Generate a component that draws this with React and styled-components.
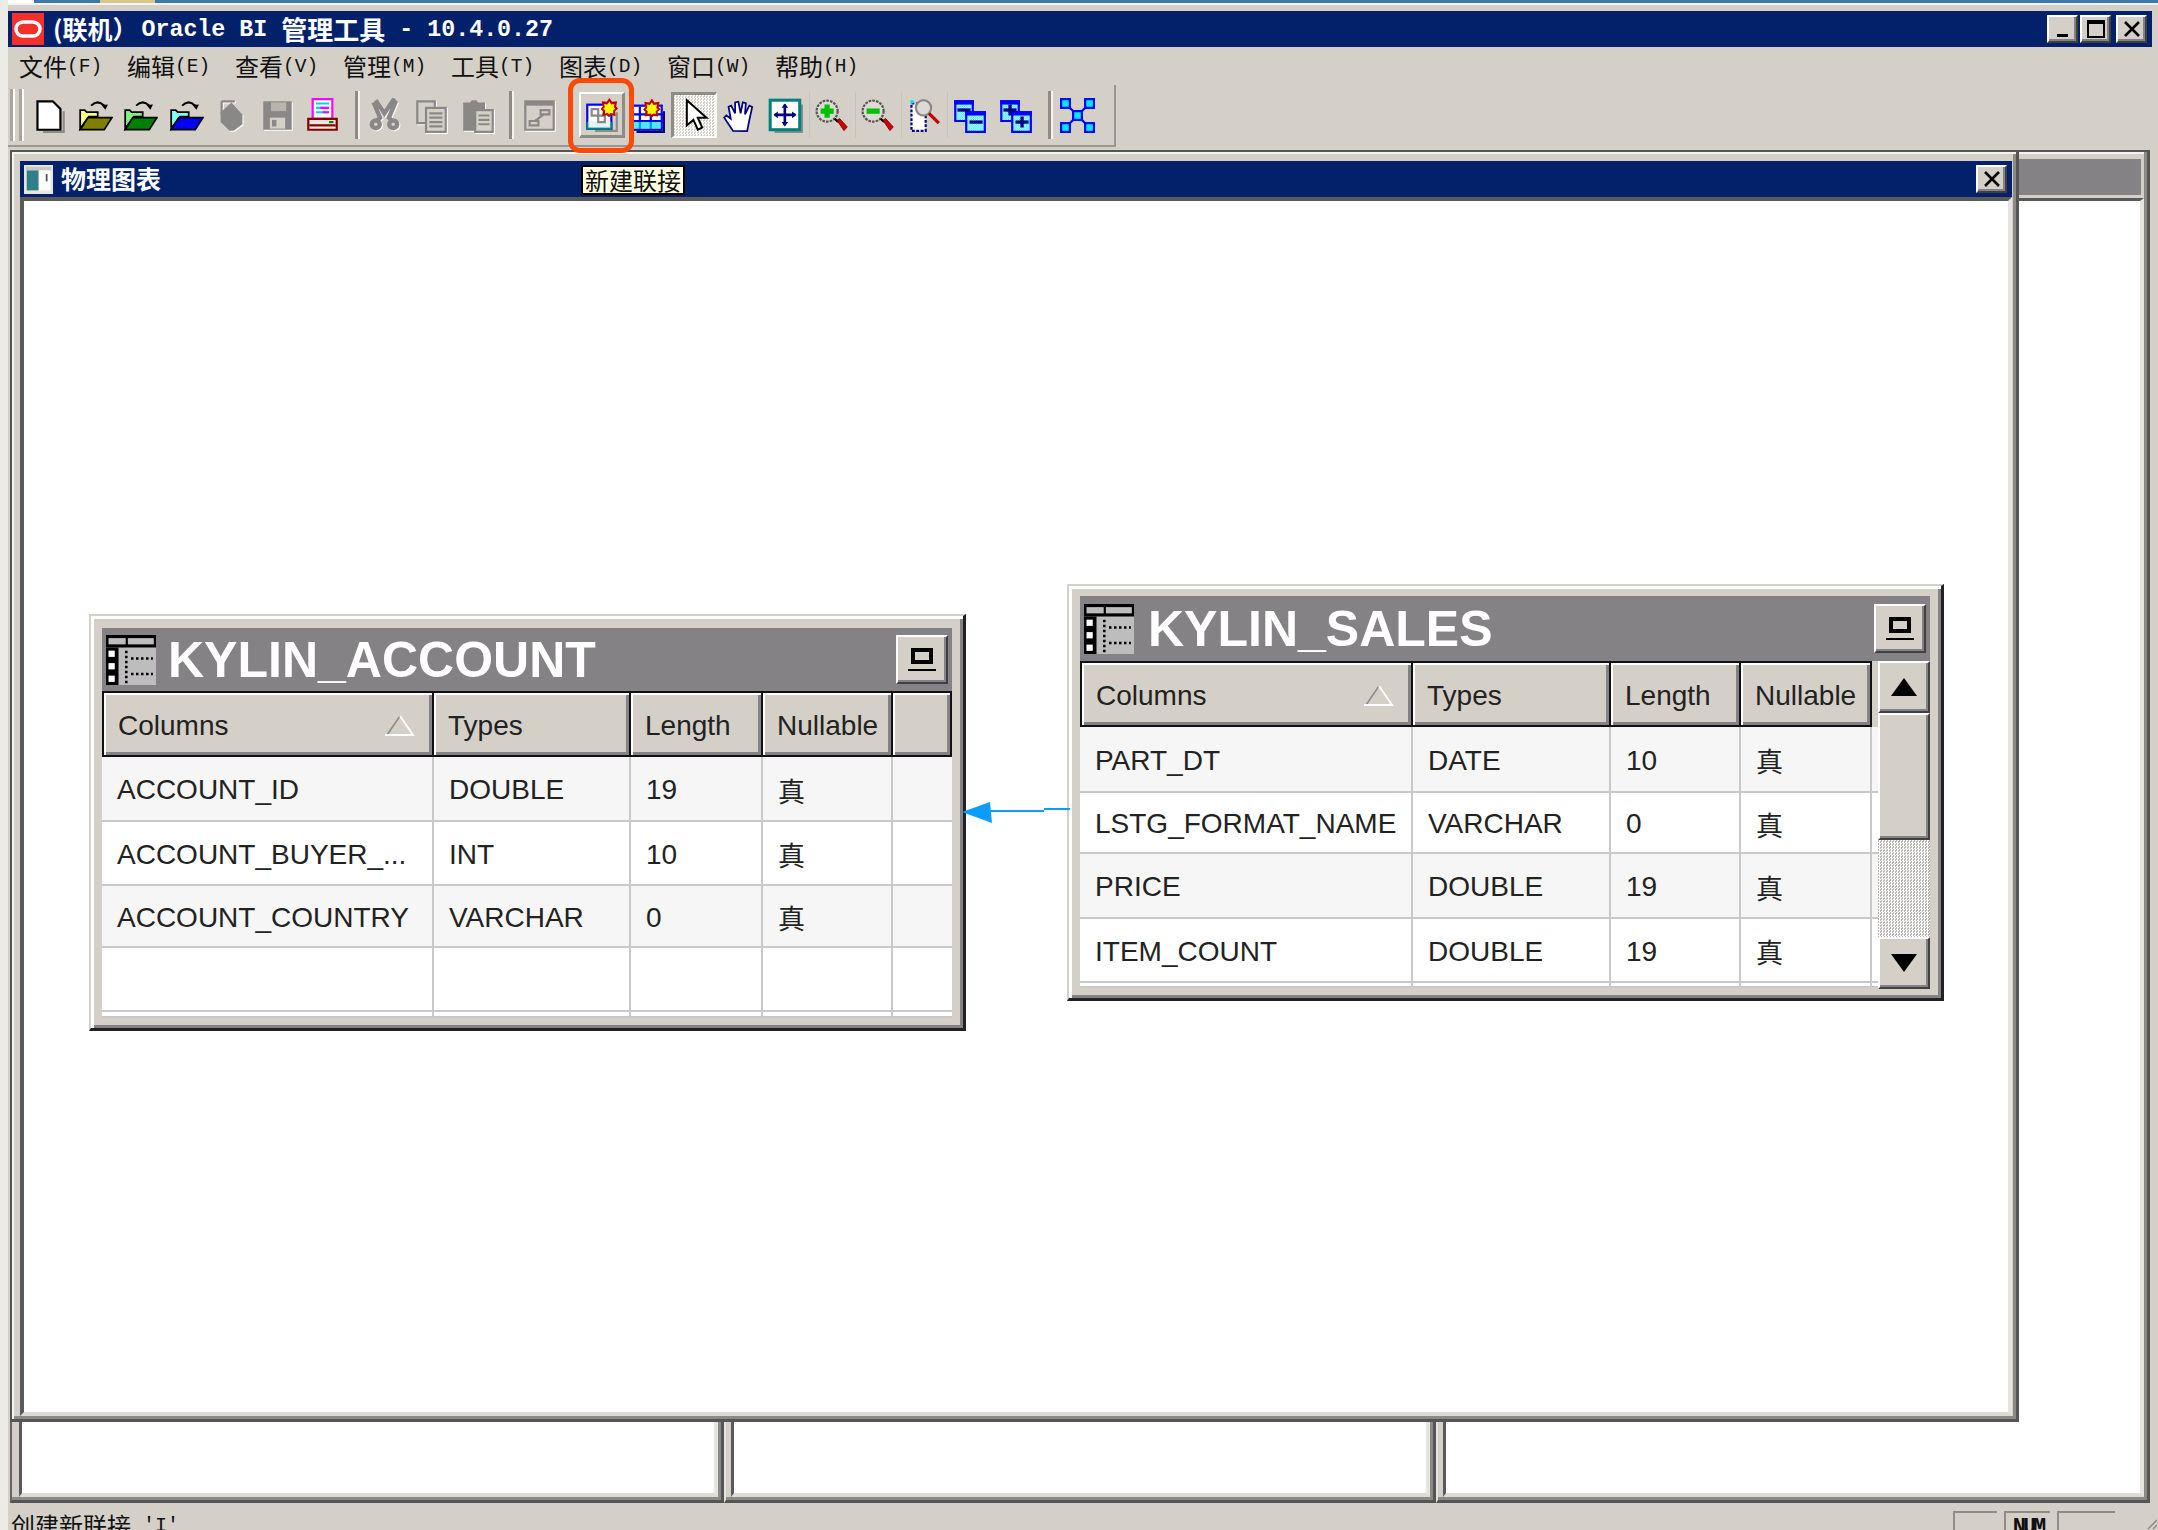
import React from "react";
import styled, { createGlobalStyle } from "styled-components";

const GlobalStyle = createGlobalStyle`
  html, body {
    margin: 0;
    background: #fff;
    overflow: hidden;
  }
  * {
    box-sizing: border-box;
  }
`;

const FACE = "#d4d0c8";
const SANS = `"Liberation Sans", "Noto Sans CJK SC", sans-serif`;
const CJK = `"Noto Sans CJK SC", sans-serif`;
const MONO = `"Liberation Mono", "Noto Sans CJK SC", monospace`;

const Page = styled.div`
  position: relative;
  width: 2158px;
  height: 1530px;
  overflow: hidden;
  background: ${FACE};
  display: flex;
  flex-direction: column;
  border-left: 8px solid #ecebe6;
`;

const TopStrip = styled.div`
  height: 3px;
  margin-left: -8px;
  background: linear-gradient(90deg, #fff 0 34px, #3d78ae 34px 100px, #d8c68c 100px 155px, #3d78ae 155px);
`;

const TopEdge = styled.div`
  height: 2px;
  margin: 0 0 6px -8px;
  background: #f4f3ef;
`;

const TitleBar = styled.div`
  height: 36px;
  width: 2144px;
  flex: none;
  background: #03216b;
  color: #fff;
  display: flex;
  align-items: center;
  padding: 0 5px 0 4px;
  font-weight: 700;
`;

const CjkText = styled.span`
  font-family: ${CJK};
  font-size: ${(p) => p.$size || 25}px;
  line-height: 1;
  white-space: pre;
`;

const MonoText = styled.span`
  font-family: ${MONO};
  font-size: ${(p) => p.$size || 23.3}px;
  line-height: 1;
  white-space: pre;
  margin-left: ${(p) => p.$left || 0}px;
  margin-top: ${(p) => p.$top || 0}px;
`;

const AppTitle = styled.div`
  display: flex;
  align-items: center;
  margin-left: 9px;
`;

const Logo = styled.svg`
  width: 32px;
  height: 32px;
  flex: none;
`;

const CaptionButtons = styled.div`
  display: flex;
  margin-left: auto;
`;

const RaisedButton = styled.button`
  padding: 0;
  margin: 0 0 0 ${(p) => p.$left || 0}px;
  width: ${(p) => p.$w}px;
  height: ${(p) => p.$h}px;
  flex: none;
  display: flex;
  align-items: center;
  justify-content: center;
  background: ${FACE};
  border: 0;
  border-top: 2px solid #fff;
  border-left: 2px solid #fff;
  border-right: 2px solid #404040;
  border-bottom: 2px solid #404040;
  box-shadow: inset -2px -2px 0 #848284;
`;

const MenuBar = styled.nav`
  height: 38px;
  flex: none;
  display: flex;
  align-items: center;
  padding-left: 11px;
  color: #111;
`;

const MenuItem = styled.div`
  width: 108px;
  display: flex;
  align-items: center;
`;

const ToolRow = styled.div`
  height: 65px;
  flex: none;
  display: flex;
  align-items: flex-start;
`;

const Toolbar = styled.div`
  height: 62px;
  display: flex;
  align-items: center;
  padding: 0 13px 0 2px;
  border-right: 2px solid #9a9790;
  border-bottom: 2px solid #9a9790;
`;

const Grip = styled.div`
  width: 12px;
  height: 52px;
  margin-right: 5px;
  border-left: 3px solid #a8a59e;
  border-right: 3px solid #a8a59e;
  box-shadow: inset 2px 0 0 #fff, 2px 0 0 #fff;
`;

const ToolSep = styled.div`
  width: 5px;
  height: 48px;
  flex: none;
  margin: 0 ${(p) => p.$r}px 0 ${(p) => p.$l}px;
  border-left: 3px solid #8f8c86;
  border-right: 2px solid #f4f3ef;
`;

const ToolGroup = styled.div`
  display: flex;
  align-items: center;
  margin-left: ${(p) => p.$left || 0}px;
`;

const ToolButton = styled.div`
  width: ${(p) => p.$w || 45.5}px;
  height: 46px;
  flex: none;
  display: flex;
  align-items: center;
  justify-content: center;
  ${(p) => p.$divider && `box-shadow: inset 1px 0 0 #c6c3bb;`}
  ${(p) =>
    p.$raised &&
    `
    border-top: 2px solid #fff;
    border-left: 2px solid #fff;
    border-right: 3px solid #8f8c86;
    border-bottom: 3px solid #8f8c86;
  `}
  ${(p) =>
    p.$pressed &&
    `
    border-top: 3px solid #8f8c86;
    border-left: 3px solid #8f8c86;
    border-right: 2px solid #fff;
    border-bottom: 2px solid #fff;
    background: repeating-conic-gradient(#fff 0 25%, #d4d0c8 0 50%) 0 0 / 3px 3px;
  `}
`;

const Px = styled.svg`
  width: ${(p) => p.$size || 35}px;
  height: ${(p) => p.$size || 35}px;
  display: block;
  flex: none;
  ${(p) => p.$off && `filter: drop-shadow(1.2px 1.2px 0 #fff);`}
`;

const Workspace = styled.div`
  margin-left: 2px;
  width: 2140px;
  height: 1353px;
  flex: none;
  display: grid;
  grid-template-rows: 1272px 81px;
`;

const TopArea = styled.div`
  display: flex;
  min-height: 0;
`;

const ChildWindow = styled.section`
  width: 2009px;
  height: 1272px;
  flex: none;
  display: flex;
  flex-direction: column;
  padding: 9px 4px 3px 8px;
  background: ${FACE};
  border-style: solid;
  border-color: #555;
  border-width: 2px 3px 3px 2px;
  box-shadow: inset 2px 2px 0 #f4f3ef, inset -3px -3px 0 #8c8a85;
`;

const ChildTitle = styled.header`
  height: 36px;
  flex: none;
  display: flex;
  align-items: center;
  padding: 0 5px 0 4px;
  background: #03216b;
  color: #fff;
  font-weight: 700;
`;

const ChildName = styled.div`
  margin-left: 8px;
`;

const Canvas = styled.div`
  position: relative;
  flex: 1;
  background: #fff;
  border-style: solid;
  border-width: 4px;
  border-color: #5a5a5a #e6e4de #dedbd4 #5a5a5a;
`;

const BackPane = styled.div`
  flex: 1;
  display: flex;
  flex-direction: column;
  padding-top: 7px;
  background: ${FACE};
  border-top: 2px solid #555;
  border-right: 3px solid #555;
  box-shadow: inset -3px 0 0 #8c8a85, inset 0 2px 0 #f4f3ef;
`;

const BackTitle = styled.div`
  height: 36px;
  flex: none;
  margin-right: 6px;
  background: #848284;
`;

const BackBody = styled.div`
  flex: 1;
  margin: 3px 3px 0 0;
  background: #fff;
  border-top: 3px solid #5a5a5a;
  border-right: 4px solid #e6e4de;
`;

const PaneRow = styled.div`
  display: grid;
  grid-template-columns: 714px 712px 714px;
`;

const Pane = styled.div`
  display: flex;
  padding: 0 3px 3px ${(p) => p.$left}px;
  background: ${FACE};
  border-left: 2px solid ${(p) => p.$edge};
  border-right: 3px solid #555;
  border-bottom: 3px solid #555;
  box-shadow: inset -3px -3px 0 #8c8a85;
`;

const PaneBody = styled.div`
  flex: 1;
  background: #fff;
  border-left: 3px solid #5a5a5a;
  border-right: 4px solid #e6e4de;
  border-bottom: 4px solid #dedbd4;
`;

const StatusBar = styled.footer`
  height: 27px;
  flex: none;
  width: 2150px;
  position: relative;
  display: flex;
  overflow: hidden;
  padding-left: 3px;
  color: #111;
`;

const StatusText = styled.div`
  margin-top: 9px;
  display: flex;
  font-size: 24px;
  line-height: 26px;
  font-family: ${CJK};
  white-space: pre;
`;

const StatusCells = styled.div`
  margin: 8px 0 0 auto;
  display: flex;
  padding-right: 43px;
`;

const StatusCell = styled.div`
  width: ${(p) => p.$w}px;
  height: 30px;
  margin-left: ${(p) => p.$left}px;
  border-top: 2px solid #8f8c86;
  border-left: 2px solid #8f8c86;
  font-family: ${MONO};
  font-size: 22px;
  font-weight: 700;
  letter-spacing: -3px;
  line-height: 30px;
  text-align: center;
`;

const StatusGrip = styled.svg`
  position: absolute;
  right: 0;
  bottom: 0;
  width: 12px;
  height: 12px;
`;

// diagram nodes sit on a free canvas, so they are placed by coordinates
const Node = styled.div`
  position: absolute;
  left: ${(p) => p.$x}px;
  top: ${(p) => p.$y}px;
  width: 877px;
  height: 417px;
  display: flex;
  flex-direction: column;
  padding: ${(p) => p.$pad}px 11px 9px 11px;
  background: ${FACE};
  border-style: solid;
  border-width: 2px 3px 3px 2px;
  border-color: #d4d0c8 #222 #222 #d4d0c8;
  box-shadow: inset 3px 3px 0 #fff, inset -3px -3px 0 #848284;
`;

const NodeTitle = styled.div`
  height: ${(p) => p.$h}px;
  flex: none;
  display: flex;
  align-items: center;
  gap: ${(p) => p.$gap}px;
  padding: 0 4px;
  background: #848284;
  color: #fff;
  font-family: ${SANS};
  font-size: 50px;
  font-weight: 700;
`;

const NodeName = styled.div`
  line-height: 1;
  flex: 1;
`;

const NodeBody = styled.div`
  display: flex;
  flex: 1;
  min-height: 0;
`;

const Table = styled.div`
  flex: 1;
  min-width: 0;
  font-family: ${SANS};
  font-size: 28px;
  color: #222;
`;

const HeadRow = styled.div`
  display: grid;
  grid-template-columns: ${(p) => p.$cols};
  height: 66px;
`;

const HeadCell = styled.div`
  display: flex;
  align-items: center;
  justify-content: space-between;
  padding: 3px 16px 0 14px;
  background: ${FACE};
  border-style: solid;
  border-color: #111;
  border-width: 2px 2px 2px 0;
  box-shadow: inset 2px 2px 0 #fff, inset -3px -3px 0 #848284;
  &:first-child {
    border-left-width: 2px;
  }
`;

const DataRow = styled.div`
  display: grid;
  grid-template-columns: ${(p) => p.$cols};
  height: ${(p) => p.$h}px;
  background: ${(p) => (p.$shade ? "#f6f6f6" : "#fff")};
  border-bottom: 2px solid #c9c9c9;
  overflow: hidden;
`;

const Cell = styled.div`
  display: flex;
  align-items: center;
  padding: 3px 0 0 15px;
  white-space: nowrap;
  overflow: hidden;
  border-right: 2px solid #c9c9c9;
  &:last-child {
    border-right: 0;
  }
`;

const TrueMark = styled.span`
  font-family: ${CJK};
  font-size: 27px;
`;

const SortMark = styled.svg`
  width: 32px;
  height: 22px;
  flex: none;
`;

const ScrollBar = styled.div`
  width: 52px;
  flex: none;
  display: flex;
  flex-direction: column;
`;

const ScrollTrack = styled.div`
  flex: 1;
  background: repeating-conic-gradient(#fff 0 25%, #b9b7b2 0 50%) 0 0 / 3px 3px;
`;

const Link = styled.svg`
  position: absolute;
  left: 938px;
  top: 594px;
  width: 108px;
  height: 30px;
`;

const Tooltip = styled.div`
  position: absolute;
  left: 573px;
  top: 165px;
  width: 104px;
  height: 30px;
  background: #ffffe1;
  border: 2px solid #000;
  color: #111;
  font-family: ${CJK};
  font-size: 24px;
  line-height: 25px;
  text-align: center;
  white-space: nowrap;
`;

const CalloutRing = styled.div`
  position: absolute;
  left: 560px;
  top: 78px;
  width: 66px;
  height: 75px;
  border: 5px solid #fb4a08;
  border-radius: 12px;
`;

/* ---- drawings ---- */

const Dither = ({ id, color }) => (
  <pattern id={id} width="1" height="1" patternUnits="userSpaceOnUse">
    <rect width="1" height="1" fill="#fff" />
    <rect width="0.5" height="0.5" fill={color} />
    <rect x="0.5" y="0.5" width="0.5" height="0.5" fill={color} />
  </pattern>
);

const DocIcon = () => (
  <Px viewBox="0 0 16 16">
    <path d="M14.5 6v9.5H5" fill="none" stroke="#8f8c86" />
    <path d="M2.5 1.5h7l3.5 3.5v9.5H2.5z" fill="#fff" stroke="#000" />
  </Px>
);

const FolderIcon = ({ id, light, dark }) => (
  <Px viewBox="0 0 16 16">
    <defs>
      <Dither id={id} color={light} />
    </defs>
    <path d="M6 3.5q3-3 6 0" fill="none" stroke="#000" strokeWidth="0.9" />
    <path d="M13.7 3l-3 .2 1.8 2.2z" fill="#000" />
    <path d="M1 5.5h2l1 1h5v2H5l-4 5.5z" fill={`url(#${id})`} stroke="#000" strokeWidth="0.8" />
    <path d="M4.5 9H15.5l-3.5 5.5H1z" fill={dark} stroke="#000" strokeWidth="0.8" />
  </Px>
);

const DbOffIcon = () => (
  <Px viewBox="0 0 16 16" $off>
    <path d="M3.5 1.5h6M3.500 1.500v6" stroke="#8a8886" fill="none" />
    <path d="M8 2l5 5.500v4.500l-4 3h-2l-4-4v-4.500z" fill="#8a8886" />
  </Px>
);

const FloppyOffIcon = () => (
  <Px viewBox="0 0 16 16" $off>
    <path d="M1.500 1.500h13v13h-13z" fill="#8a8886" />
    <path d="M4.500 9h7v5h-7z" fill="#d4d0c8" />
    <rect x="5.500" y="10" width="2" height="3" fill="#8a8886" />
    <path d="M5 2h7v4H5z" fill="#b7b4ad" />
  </Px>
);

const ScissorsOffIcon = () => (
  <Px viewBox="0 0 16 16" $off>
    <path d="M4 1l4 6 4-6 1 1-3 7 2 2M3 2l3 7-2 2" fill="none" stroke="#8a8886" strokeWidth="2" />
    <circle cx="4" cy="12" r="2.800" fill="#8a8886" />
    <circle cx="12" cy="12" r="2.800" fill="#8a8886" />
    <circle cx="4" cy="12" r="0.800" fill="#d4d0c8" />
    <circle cx="12" cy="12" r="0.800" fill="#d4d0c8" />
  </Px>
);

const CopyOffIcon = () => (
  <Px viewBox="0 0 16 16" $off>
    <path d="M1.500 1.500h8v10h-8z" fill="#d4d0c8" stroke="#8a8886" />
    <path d="M5.500 4.500h9v11h-9z" fill="#d4d0c8" stroke="#8a8886" />
    <path d="M7 7h6M7 9h6M7 11h6M7 13h6" stroke="#8a8886" />
  </Px>
);

const PasteOffIcon = () => (
  <Px viewBox="0 0 16 16" $off>
    <path d="M1 2h3l1-1h2l1 1h3v13H1z" fill="#8a8886" />
    <path d="M6.500 5.500h8v10h-8z" fill="#d4d0c8" stroke="#8a8886" />
    <path d="M8 8h5M8 10h5M8 12h5" stroke="#8a8886" />
  </Px>
);

const DiagramOffIcon = () => (
  <Px viewBox="0 0 16 16" $off>
    <path d="M1.500 1.500h13v13h-13z" fill="#d4d0c8" stroke="#8a8886" />
    <rect x="1.500" y="1.500" width="13" height="2" fill="#8a8886" />
    <path d="M8.500 5.500h4v2h-4zM3.500 10.500h4v2h-4zM10 7.500l-4 3" fill="none" stroke="#8a8886" />
  </Px>
);

const PrinterIcon = () => (
  <Px viewBox="0 0 16 16">
    <rect x="3.500" y="0.500" width="9" height="9" fill="#fff" stroke="#ff00ff" />
    <path d="M5 2.500h6M5 4.500h6M5 6.500h6" stroke="#00d0ff" />
    <path d="M7 4.500h4M8 6.500h3" stroke="#ff00ff" />
    <path d="M1.500 9.500h13v5h-13z" fill="#e8e6e0" stroke="#800000" />
    <rect x="2" y="12" width="12" height="1" fill="#800000" />
    <rect x="11" y="10.500" width="2" height="1" fill="#008000" />
  </Px>
);

const Star = ({ x = 0, y = 0 }) => (
  <g transform={`translate(${x} ${y})`}>
    <path d="M4 0l1.200 1.800 2.300-.3-.4 2.400.9 1-1.400 1.200.2 2.200-2-.4-1 1-1-1-2.100.4.3-2.200L0 5l1-1.100L.5 1.500l2.300.3z" fill="#c00000" />
    <path d="M4 1.700l.8 1.300 1.500-.2-.3 1.500.7.7-1 .8.1 1.300-1.300-.2-.6.6-.6-.6-1.300.2.1-1.300-.9-.8.7-.7-.3-1.500 1.500.2z" fill="#ffff00" />
  </g>
);

const NewLinkIcon = () => (
  <Px viewBox="0 0 16 16">
    <path d="M15 7v8.500H5" fill="none" stroke="#8f8c86" />
    <rect x="1.500" y="3.500" width="11" height="11" fill="#fff" stroke="#0000ff" />
    <path d="M1 11.500h12v3.500H1z" fill="#008080" />
    <rect x="2" y="11" width="10" height="3" fill="#e4f2f2" />
    <path d="M3.500 5.500h3v3h-3zM6.500 8.500h3v3h-3z" fill="none" stroke="#8a8886" />
    <Star x={7.600} y={0.400} />
  </Px>
);

const NewTableIcon = () => (
  <Px viewBox="0 0 16 16">
    <rect x="0.500" y="3.500" width="14" height="11" fill="#fff" stroke="#0000ff" />
    <path d="M0 7.500h15M0 10.500h15M4.500 4v10M9.500 4v10" stroke="#0000ff" />
    <rect x="1" y="11" width="13" height="3" fill="#00e0ff" opacity="0.7" />
    <path d="M15.500 6v9.500H3" fill="none" stroke="#000080" />
    <Star x={6} y={0.200} />
  </Px>
);

const PointerIcon = () => (
  <Px viewBox="0 0 16 16">
    <path d="M4.500 1v11.500l3-2.500 2 4.500 2-1-2-4.500h4z" fill="#fff" stroke="#000" strokeWidth="0.9" />
  </Px>
);

const HandIcon = () => (
  <Px viewBox="0 0 16 16">
    <path
      d="M5 15l-4-6 1-1 2 1.500L3 4l1.200-.5L6 7 6 2l1.500-.3L8.500 7l1-5 1.400.4L10.500 7.500l2-4 1.300.6-1.300 6-1 5z"
      fill="#fff"
      stroke="#000080"
      strokeWidth="0.8"
    />
  </Px>
);

const FitIcon = () => (
  <Px viewBox="0 0 16 16">
    <path d="M15.500 3v12.500H3" fill="none" stroke="#8f8c86" />
    <rect x="1" y="1" width="13.500" height="13.500" fill="#fff" stroke="#008080" strokeWidth="1.400" />
    <path d="M7.700 3v9.500M3 7.700h9.500" stroke="#000080" strokeWidth="1.200" />
    <path d="M7.700 2.500l1.500 2H6.200zM7.700 13l1.500-2H6.200zM2.500 7.700l2-1.500v3zM13 7.700l-2-1.500v3z" fill="#000080" />
  </Px>
);

const ZoomIcon = ({ children }) => (
  <Px viewBox="0 0 16 16">
    <circle cx="6" cy="6" r="4.800" fill="#dcdad4" stroke="#555" strokeWidth="1" strokeDasharray="1.200 0.500" />
    {children}
    <path d="M9.500 9.500l1.500 1.500" stroke="#000" />
    <path d="M10.500 10.200l1.200-.8 3.500 3.800-1.500 1.700z" fill="#d00000" stroke="#700" strokeWidth="0.400" />
  </Px>
);

const ZoomRectIcon = () => (
  <Px viewBox="-1 0 16 16">
    <rect x="1.500" y="2.500" width="6.500" height="12.500" fill="#fff" stroke="#000080" strokeDasharray="1.300 0.700" />
    <rect x="1" y="1" width="1.500" height="1.500" fill="#00e0ff" />
    <circle cx="7" cy="4.500" r="3.500" fill="#dcdad4" stroke="#8a8886" />
    <path d="M9.500 7l4.500 4.500" stroke="#c00000" strokeWidth="1.500" />
  </Px>
);

const StackIcon = ({ plus, id }) => (
  <Px viewBox="0 0 16 16">
    <defs>
      <Dither id={id} color="#00e0ff" />
    </defs>
    <path d="M1.500 1.500h8v9h-8z" fill={`url(#${id})`} stroke="#0000ff" />
    <rect x="1" y="1" width="9" height="2" fill="#0000ff" />
    <path d="M6.500 6.500h8.500v9H6.500z" fill={`url(#${id})`} stroke="#0000ff" />
    <rect x="6" y="6" width="9.500" height="2" fill="#0000ff" />
    <path d="M2.500 5.500h6" stroke="#000080" strokeWidth="1.500" />
    <path d="M8 11h6" stroke="#000080" strokeWidth="1.500" />
    {plus && <path d="M5.500 3v5M11 8.500v5" stroke="#000080" strokeWidth="1.500" />}
  </Px>
);

const NetNode = ({ x, y }) => (
  <rect x={x} y={y} width="4" height="4" fill="#00e8ff" stroke="#0000ff" strokeWidth="1" />
);

const NetworkIcon = () => (
  <Px viewBox="0 0 16 16">
    <path d="M3 3l10 10M13 3L3 13" stroke="#0000ff" strokeWidth="1" />
    <NetNode x={0.500} y={0.500} />
    <NetNode x={11.500} y={0.500} />
    <NetNode x={6} y={6} />
    <NetNode x={0.500} y={11.500} />
    <NetNode x={11.500} y={11.500} />
  </Px>
);

const TableIcon = () => (
  <Px viewBox="0 0 16 16" $size={50}>
    <rect width="16" height="16" fill="#bdbdbd" />
    <rect width="16" height="4" fill="#000" />
    <rect x="0.800" y="1" width="5.500" height="2" fill="#bdbdbd" />
    <rect x="7" y="1" width="8.300" height="2" fill="#bdbdbd" />
    <rect width="4" height="16" y="4" fill="#000" />
    <rect x="0.800" y="5" width="2" height="2" fill="#fff" />
    <rect x="0.800" y="9" width="2" height="2" fill="#fff" />
    <rect x="0.800" y="13" width="2" height="2" fill="#fff" />
    <path d="M6.500 5v11M8 7.500h7M8 12.500h7" stroke="#000" strokeDasharray="0.800 0.800" strokeWidth="0.800" />
  </Px>
);

const ChildIcon = () => (
  <Px viewBox="0 0 16 16" $size={29}>
    <rect width="16" height="16" fill="#e8e6e0" />
    <rect x="1" y="1" width="14" height="2" fill="#c8c8c4" />
    <rect x="1.500" y="3" width="6.500" height="11" fill="#2f7f88" />
    <rect x="8.500" y="3" width="6" height="11" fill="#fff" />
    <rect x="12" y="5" width="1" height="4" fill="#555" />
  </Px>
);

const CloseGlyph = () => (
  <svg width="18" height="16" viewBox="0 0 18 16">
    <path d="M2 1l14 14M16 1L2 15" stroke="#000" strokeWidth="2.600" />
  </svg>
);

const RestoreGlyph = () => (
  <svg width="30" height="24" viewBox="0 0 30 24">
    <rect x="6" y="2" width="18" height="12" fill="none" stroke="#000" strokeWidth="4" />
    <rect x="1" y="21" width="28" height="2" fill="#000" />
  </svg>
);

const SortGlyph = () => (
  <SortMark viewBox="0 0 32 22">
    <path d="M16 1L3 20" stroke="#8f8c86" strokeWidth="1.500" />
    <path d="M16 1l13 19H1" fill="none" stroke="#fff" strokeWidth="2" />
  </SortMark>
);

const TOOLS_A = [
  <DocIcon />,
  <FolderIcon id="fa" light="#ffff00" dark="#808000" />,
  <FolderIcon id="fb" light="#00e000" dark="#008000" />,
  <FolderIcon id="fc" light="#00ffff" dark="#0000ff" />,
  <DbOffIcon />,
  <FloppyOffIcon />,
  <PrinterIcon />,
];

const TOOLS_B = [<ScissorsOffIcon />, <CopyOffIcon />, <PasteOffIcon />];

const MENUS = [
  ["文件", "(F)"],
  ["编辑", "(E)"],
  ["查看", "(V)"],
  ["管理", "(M)"],
  ["工具", "(T)"],
  ["图表", "(D)"],
  ["窗口", "(W)"],
  ["帮助", "(H)"],
];

const HEADS = ["Columns", "Types", "Length", "Nullable"];

const ACCOUNT_ROWS = [
  { h: 65, cells: ["ACCOUNT_ID", "DOUBLE", "19"] },
  { h: 64, cells: ["ACCOUNT_BUYER_...", "INT", "10"] },
  { h: 62, cells: ["ACCOUNT_COUNTRY", "VARCHAR", "0"] },
  { h: 64, cells: ["", "", ""], blank: true },
  { h: 6, cells: ["", "", ""], blank: true },
];

const SALES_ROWS = [
  { h: 66, cells: ["PART_DT", "DATE", "10"] },
  { h: 61, cells: ["LSTG_FORMAT_NAME", "VARCHAR", "0"] },
  { h: 65, cells: ["PRICE", "DOUBLE", "19"] },
  { h: 64, cells: ["ITEM_COUNT", "DOUBLE", "19"] },
  { h: 5, cells: ["", "", ""], blank: true },
];

const TableView = ({ cols, rows, extraHead }) => (
  <Table>
    <HeadRow $cols={cols}>
      {HEADS.map((h, i) => (
        <HeadCell key={h}>
          {h}
          {i === 0 && <SortGlyph />}
        </HeadCell>
      ))}
      {extraHead && <HeadCell />}
    </HeadRow>
    {rows.map((row, i) => (
      <DataRow key={i} $cols={cols} $h={row.h} $shade={i % 2 === 0 && !row.blank}>
        {row.cells.map((c, j) => (
          <Cell key={j}>{c}</Cell>
        ))}
        <Cell>{!row.blank && <TrueMark>真</TrueMark>}</Cell>
        <Cell />
      </DataRow>
    ))}
  </Table>
);

const DiagramNode = ({ x, y, pad, titleH, gap, name, children }) => (
  <Node $x={x} $y={y} $pad={pad}>
    <NodeTitle $h={titleH} $gap={gap}>
      <TableIcon />
      <NodeName>{name}</NodeName>
      <RaisedButton $w={52} $h={49}>
        <RestoreGlyph />
      </RaisedButton>
    </NodeTitle>
    <NodeBody>{children}</NodeBody>
  </Node>
);

export default function App() {
  return (
    <>
      <GlobalStyle />
      <Page>
        <TopStrip />
        <TopEdge />
        <TitleBar>
          <Logo viewBox="0 0 32 32">
            <rect width="32" height="32" fill="#f5302a" />
            <rect x="4" y="9" width="24" height="14" rx="7" fill="none" stroke="#fff" strokeWidth="3.500" />
          </Logo>
          <AppTitle>
            <CjkText>(联机）</CjkText>
            <MonoText $left={4} $top={3}>
              Oracle BI{" "}
            </MonoText>
            <CjkText $size={26}>管理工具</CjkText>
            <MonoText $top={3}> - 10.4.0.27</MonoText>
          </AppTitle>
          <CaptionButtons>
            <RaisedButton $w={31} $h={28}>
              <svg width="16" height="18" viewBox="0 0 16 18">
                <rect x="2" y="14" width="11" height="3" fill="#000" />
              </svg>
            </RaisedButton>
            <RaisedButton $w={31} $h={28} $left={2}>
              <svg width="20" height="20" viewBox="0 0 20 20">
                <path d="M2 2h16v16H2z" fill="none" stroke="#000" strokeWidth="2" />
                <rect x="2" y="2" width="16" height="3" fill="#000" />
              </svg>
            </RaisedButton>
            <RaisedButton $w={31} $h={28} $left={5}>
              <CloseGlyph />
            </RaisedButton>
          </CaptionButtons>
        </TitleBar>

        <MenuBar>
          {MENUS.map(([label, key]) => (
            <MenuItem key={label}>
              <CjkText $size={24}>{label}</CjkText>
              <MonoText $size={19.5} $top={4}>
                {key}
              </MonoText>
            </MenuItem>
          ))}
        </MenuBar>

        <ToolRow>
          <Toolbar>
            <Grip />
            <ToolGroup>
              {TOOLS_A.map((icon, i) => (
                <ToolButton key={i}>{icon}</ToolButton>
              ))}
            </ToolGroup>
            <ToolSep $l={9} $r={1} />
            <ToolGroup>
              {TOOLS_B.map((icon, i) => (
                <ToolButton key={i} $w={47}>
                  {icon}
                </ToolButton>
              ))}
            </ToolGroup>
            <ToolSep $l={7} $r={3} />
            <ToolButton $w={46}>
              <DiagramOffIcon />
            </ToolButton>
            <ToolGroup $left={16}>
              <ToolButton $w={46} $raised>
                <NewLinkIcon />
              </ToolButton>
              <ToolButton $w={46}>
                <NewTableIcon />
              </ToolButton>
              <ToolButton $w={46} $pressed>
                <PointerIcon />
              </ToolButton>
              <ToolButton $w={46}>
                <HandIcon />
              </ToolButton>
              <ToolButton $w={46}>
                <FitIcon />
              </ToolButton>
              <ToolButton $w={46} $divider>
                <ZoomIcon>
                  <path d="M6 3v6M3 6h6" stroke="#00c000" strokeWidth="2.400" />
                </ZoomIcon>
              </ToolButton>
              <ToolButton $w={46} $divider>
                <ZoomIcon>
                  <path d="M3 6h6" stroke="#00c000" strokeWidth="2.400" />
                </ZoomIcon>
              </ToolButton>
              <ToolButton $w={46} $divider>
                <ZoomRectIcon />
              </ToolButton>
              <ToolButton $w={46} $divider>
                <StackIcon id="sa" />
              </ToolButton>
              <ToolButton $w={46}>
                <StackIcon id="sb" plus />
              </ToolButton>
            </ToolGroup>
            <ToolSep $l={9} $r={2} />
            <ToolButton $w={46}>
              <NetworkIcon />
            </ToolButton>
          </Toolbar>
        </ToolRow>

        <Workspace>
          <TopArea>
            <ChildWindow>
              <ChildTitle>
                <ChildIcon />
                <ChildName>
                  <CjkText>物理图表</CjkText>
                </ChildName>
                <CaptionButtons>
                  <RaisedButton $w={31} $h={28}>
                    <CloseGlyph />
                  </RaisedButton>
                </CaptionButtons>
              </ChildTitle>
              <Canvas>
                <DiagramNode x={65} y={413} pad={12} titleH={63} gap={12} name="KYLIN_ACCOUNT">
                  <TableView cols="332px 197px 132px 130px 59px" rows={ACCOUNT_ROWS} extraHead />
                </DiagramNode>
                <DiagramNode x={1043} y={383} pad={10} titleH={65} gap={14} name="KYLIN_SALES">
                  <TableView cols="333px 198px 130px 131px 5px" rows={SALES_ROWS} />
                  <ScrollBar>
                    <RaisedButton $w={52} $h={52}>
                      <svg width="28" height="20" viewBox="0 0 28 20">
                        <path d="M14 1l13 18H1z" fill="#000" />
                      </svg>
                    </RaisedButton>
                    <RaisedButton $w={52} $h={127} />
                    <ScrollTrack />
                    <RaisedButton $w={52} $h={52}>
                      <svg width="28" height="20" viewBox="0 0 28 20">
                        <path d="M14 19L27 1H1z" fill="#000" />
                      </svg>
                    </RaisedButton>
                  </ScrollBar>
                </DiagramNode>
                <Link viewBox="0 0 108 30">
                  <path d="M28 16H82M82 14H108" fill="none" stroke="#0a9cff" strokeWidth="2" />
                  <path d="M0 17L28 7l2 21z" fill="#0a9cff" />
                </Link>
              </Canvas>
            </ChildWindow>
            <BackPane>
              <BackTitle />
              <BackBody />
            </BackPane>
          </TopArea>
          <PaneRow>
            <Pane $left={7} $edge="#666">
              <PaneBody />
            </Pane>
            <Pane $left={5} $edge="#e6e4de">
              <PaneBody />
            </Pane>
            <Pane $left={5} $edge="#e6e4de">
              <PaneBody />
            </Pane>
          </PaneRow>
        </Workspace>

        <StatusBar>
          <StatusText>
            创建新联接
            <MonoText $size={20} $top={4}>
              {" 'I'"}
            </MonoText>
          </StatusText>
          <StatusCells>
            <StatusCell $w={44} $left={0} />
            <StatusCell $w={46} $left={7}>
              NUM
            </StatusCell>
            <StatusCell $w={58} $left={7} />
          </StatusCells>
          <StatusGrip viewBox="0 0 12 12">
            <path d="M11 2L2 11M11 7l-4 4" stroke="#8f8c86" strokeWidth="1.500" />
          </StatusGrip>
        </StatusBar>

        <CalloutRing />
        <Tooltip>新建联接</Tooltip>
      </Page>
    </>
  );
}
